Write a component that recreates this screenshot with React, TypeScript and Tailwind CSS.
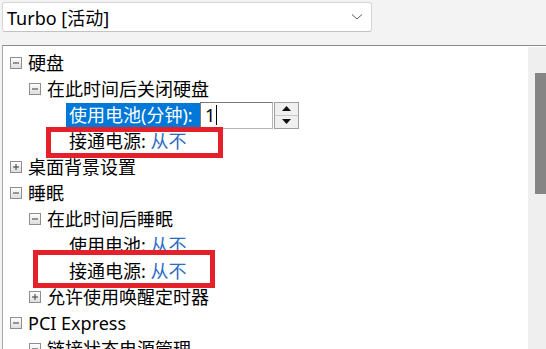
import React from "react";

const font = { fontFamily: '"Noto Sans", "Noto Sans CJK SC", sans-serif' };

function ExpandBox({ open }: { open: boolean }) {
  return (
    <svg width="12" height="12" viewBox="0 0 12 12" className="shrink-0">
      <defs>
        <linearGradient id={open ? "gm" : "gp"} x1="0" y1="0" x2="0" y2="1">
          <stop offset="0" stopColor="#ffffff" />
          <stop offset="1" stopColor="#dcdcdc" />
        </linearGradient>
      </defs>
      <rect x="0.5" y="0.5" width="11" height="11" fill={`url(#${open ? "gm" : "gp"})`} stroke="#8e8e8e" />
      <line x1="3" y1="6" x2="9" y2="6" stroke="#3a3a3a" strokeWidth="1" />
      {!open && <line x1="6" y1="3" x2="6" y2="9" stroke="#3a3a3a" strokeWidth="1" />}
    </svg>
  );
}

function Node({ level, open, label }: { level: 0 | 1; open: boolean; label: string }) {
  return (
    <div className={`flex h-[26px] items-center gap-[6px] ${level === 0 ? "pl-[7px]" : "pl-[26px]"}`}>
      <ExpandBox open={open} />
      <span className="whitespace-nowrap">{label}</span>
    </div>
  );
}

function Setting({ name, value }: { name: string; value: string }) {
  return (
    <div className="flex h-[26px] items-center pl-[63px]">
      <span className="whitespace-nowrap px-[3px]">
        {name}: <span className="text-[#2a6bc4]">{value}</span>
      </span>
    </div>
  );
}

export default function App() {
  return (
    <div
      className="relative flex h-[349px] w-[546px] flex-col overflow-hidden bg-[#f3f3f3] text-[18px] leading-[26px] text-black"
      style={font}
    >
      {/* power plan select */}
      <div className="ml-[2px] mt-[2px] flex h-[32px] w-[370px] items-center justify-between rounded-[3px] border border-[#d6d6d6] border-b-[#c2c2c2] bg-white pl-[4px] pr-[8px]">
        <span className="mt-[2px] whitespace-nowrap">Turbo [活动]</span>
        <svg width="12" height="8" viewBox="0 0 12 8">
          <path d="M1 1.5 L6 6 L11 1.5" fill="none" stroke="#5c5c5c" strokeWidth="1" />
        </svg>
      </div>

      {/* settings tree */}
      <div className="ml-[2px] mt-[13px] flex flex-1 border-l border-t border-l-[#a8a8a8] border-t-[#8a8a8a] bg-white">
        <div className="flex-1 pt-[4px]">
          <Node level={0} open label="硬盘" />
          <Node level={1} open label="在此时间后关闭硬盘" />
          <div className="flex h-[26px] items-center pl-[63px]">
            <span className="flex h-[24px] w-[134px] items-center whitespace-nowrap bg-[#0078d7] px-[3px] text-white">
              使用电池(分钟):
            </span>
            <div className="flex h-[27px] w-[73px] items-center border border-[#7a7a7a] border-b-[#b5b5b5] border-r-[#b5b5b5] bg-white pl-[4px]">
              <span>1</span>
              <span className="ml-[1px] h-[20px] w-[1px] bg-black" />
            </div>
            <div className="ml-[1px] flex h-[27px] w-[25px] flex-col border border-[#a0a0a0] bg-[#f0f0f0]">
              <div className="flex flex-1 items-center justify-center border-b border-[#c8c8c8]">
                <svg width="9" height="5" viewBox="0 0 9 5">
                  <path d="M0 5 L4.5 0 L9 5 Z" fill="#111" />
                </svg>
              </div>
              <div className="flex flex-1 items-center justify-center">
                <svg width="9" height="5" viewBox="0 0 9 5">
                  <path d="M0 0 L4.5 5 L9 0 Z" fill="#111" />
                </svg>
              </div>
            </div>
          </div>
          <Setting name="接通电源" value="从不" />
          <Node level={0} open={false} label="桌面背景设置" />
          <Node level={0} open label="睡眠" />
          <Node level={1} open label="在此时间后睡眠" />
          <Setting name="使用电池" value="从不" />
          <Setting name="接通电源" value="从不" />
          <Node level={1} open={false} label="允许使用唤醒定时器" />
          <Node level={0} open label="PCI Express" />
          <Node level={1} open label="链接状态电源管理" />
        </div>

        {/* scrollbar */}
        <div className="mt-[1px] flex w-[18px] flex-col bg-[#efefef]">
          <div className="h-[26px]" />
          <div className="ml-[7px] h-[121px] bg-[#858585]" />
        </div>
      </div>

      {/* red annotation boxes */}
      <div className="absolute left-[46px] top-[127px] h-[31px] w-[177px] border-[5px] border-[#e5202b]" />
      <div className="absolute left-[33px] top-[250px] h-[38px] w-[182px] border-[5px] border-[#e5202b]" />
    </div>
  );
}
